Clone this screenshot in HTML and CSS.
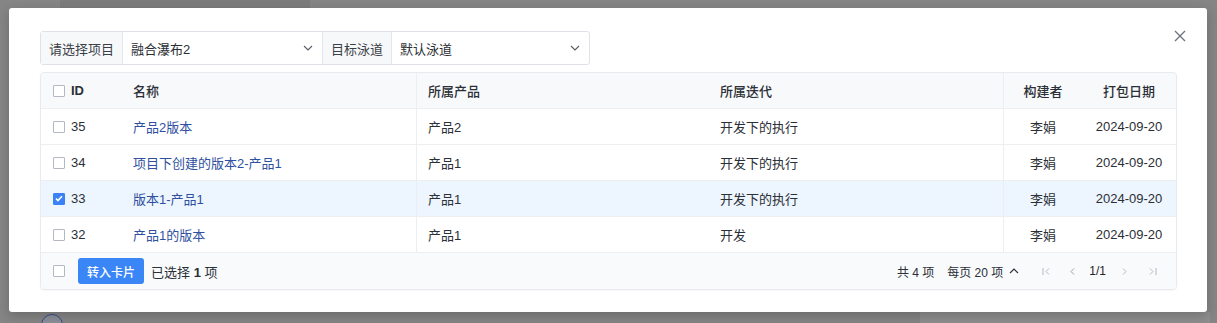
FILE: index.html
```html
<!DOCTYPE html>
<html lang="zh-CN">
  <head>
    <meta charset="UTF-8" />
    <title>转入卡片</title>
    <link rel="stylesheet" href="styles.css">
  </head>
  <body>
    <div class="backdrop">
      <div class="ghost ghost-a"></div>
      <div class="ghost ghost-b"></div>
      <div class="ghost-avatar"></div>
    </div>

    <div class="modal">
      <button class="close-btn" aria-label="关闭">
        <svg width="12" height="12" viewBox="0 0 12 12"><path d="M1 1L11 11M11 1L1 11" stroke="#6b7280" stroke-width="1.3" fill="none"/></svg>
      </button>

      <!-- 筛选条件 -->
      <div class="filter-bar">
        <span class="filter-label">请选择项目</span>
        <div class="filter-select select-project">
          <span>融合瀑布2</span>
          <svg class="chevron" width="10" height="6" viewBox="0 0 10 6"><path d="M1 1L5 5L9 1" stroke="#555b66" stroke-width="1.1" fill="none"/></svg>
        </div>
        <span class="filter-label">目标泳道</span>
        <div class="filter-select select-lane">
          <span>默认泳道</span>
          <svg class="chevron" width="10" height="6" viewBox="0 0 10 6"><path d="M1 1L5 5L9 1" stroke="#555b66" stroke-width="1.1" fill="none"/></svg>
        </div>
      </div>

      <!-- 版本列表 -->
      <div class="table">
        <div class="row head">
          <div class="cell col-id"><span class="checkbox"></span><b>ID</b></div>
          <div class="cell col-name">名称</div>
          <div class="cell col-product divider">所属产品</div>
          <div class="cell col-iter">所属迭代</div>
          <div class="cell col-owner divider">构建者</div>
          <div class="cell col-date">打包日期</div>
        </div>
        <div class="row">
          <div class="cell col-id"><span class="checkbox"></span>35</div>
          <div class="cell col-name"><a href="#">产品2版本</a></div>
          <div class="cell col-product divider">产品2</div>
          <div class="cell col-iter">开发下的执行</div>
          <div class="cell col-owner divider">李娟</div>
          <div class="cell col-date">2024-09-20</div>
        </div>
        <div class="row">
          <div class="cell col-id"><span class="checkbox"></span>34</div>
          <div class="cell col-name"><a href="#">项目下创建的版本2-产品1</a></div>
          <div class="cell col-product divider">产品1</div>
          <div class="cell col-iter">开发下的执行</div>
          <div class="cell col-owner divider">李娟</div>
          <div class="cell col-date">2024-09-20</div>
        </div>
        <div class="row selected">
          <div class="cell col-id"><span class="checkbox checked"><svg width="8" height="7" viewBox="0 0 8 7"><path d="M1 3.6L3 5.5L7 1.2" stroke="#fff" stroke-width="1.6" fill="none"/></svg></span>33</div>
          <div class="cell col-name"><a href="#">版本1-产品1</a></div>
          <div class="cell col-product divider">产品1</div>
          <div class="cell col-iter">开发下的执行</div>
          <div class="cell col-owner divider">李娟</div>
          <div class="cell col-date">2024-09-20</div>
        </div>
        <div class="row">
          <div class="cell col-id"><span class="checkbox"></span>32</div>
          <div class="cell col-name"><a href="#">产品1的版本</a></div>
          <div class="cell col-product divider">产品1</div>
          <div class="cell col-iter">开发</div>
          <div class="cell col-owner divider">李娟</div>
          <div class="cell col-date">2024-09-20</div>
        </div>

        <div class="table-footer">
          <div class="footer-left">
            <span class="checkbox"></span>
            <button class="primary-button">转入卡片</button>
            <span>已选择 <b>1</b> 项</span>
          </div>
          <div class="pager">
            <span>共 4 项</span>
            <span class="page-size">每页 20 项
              <svg width="10" height="6" viewBox="0 0 10 6"><path d="M1 5L5 1L9 5" stroke="#2b2f36" stroke-width="1.1" fill="none"/></svg>
            </span>
            <span class="pager-nav">
              <svg class="nav-first" width="9" height="9" viewBox="0 0 9 9"><path d="M1 1V8M7 1.5L4 4.5L7 7.5" stroke="#b5b9c1" stroke-width="1" fill="none"/></svg>
              <svg class="nav-prev" width="9" height="9" viewBox="0 0 9 9"><path d="M6 1.5L3 4.5L6 7.5" stroke="#9aa0a9" stroke-width="1" fill="none"/></svg>
              <span class="page-num">1/1</span>
              <svg class="nav-next" width="9" height="9" viewBox="0 0 9 9"><path d="M3 1.5L6 4.5L3 7.5" stroke="#b5b9c1" stroke-width="1" fill="none"/></svg>
              <svg class="nav-last" width="9" height="9" viewBox="0 0 9 9"><path d="M2 1.5L5 4.5L2 7.5M8 1V8" stroke="#b5b9c1" stroke-width="1" fill="none"/></svg>
            </span>
          </div>
        </div>
      </div>
    </div>
  </body>
</html>
```

FILE: styles.css
```css
body {
  font-family: "Liberation Sans", "Noto Sans CJK SC", Arial, sans-serif;
  font-size: 13px;
  color: #2b2f36;
  margin: 0;
  padding: 8px 10px 0 9px;
  height: 323px;
  box-sizing: border-box;
  overflow: hidden;
  background-color: #858585;
}

.backdrop {
  position: absolute;
  left: 0;
  top: 0;
  width: 1217px;
  height: 323px;
  overflow: hidden;
}

.ghost {
  position: absolute;
  background-color: #7b7b7b;
}

.ghost-a {
  left: 60px;
  top: 0;
  width: 250px;
  height: 8px;
}

.ghost-b {
  left: 920px;
  top: 312px;
  width: 290px;
  height: 11px;
  background-color: #8e8e8e;
}

.ghost-avatar {
  position: absolute;
  left: 41px;
  top: 314px;
  width: 20px;
  height: 20px;
  border: 1px solid #3a4f8a;
  border-radius: 50%;
  background-color: #8b8f98;
}

.modal {
  position: relative;
  width: 1198px;
  height: 304px;
  box-sizing: border-box;
  padding: 23px 30px 0 31px;
  background-color: #fff;
  border-radius: 3px;
  box-shadow: 0 4px 12px rgba(0, 0, 0, 0.2);
}

.close-btn {
  position: absolute;
  top: 22px;
  right: 21px;
  padding: 0;
  border: none;
  background: none;
  cursor: pointer;
  line-height: 0;
}

.filter-bar {
  display: flex;
  width: 550px;
  height: 34px;
  border: 1px solid #dfe2e8;
  border-radius: 3px;
  box-sizing: border-box;
}

.filter-label {
  display: flex;
  align-items: center;
  padding: 0 8px;
  background-color: #f7f8fa;
  color: #3b3f47;
  border-right: 1px solid #e3e6eb;
}

.filter-label + .filter-select {
  border-right: 1px solid #e3e6eb;
}

.filter-select {
  display: flex;
  align-items: center;
  justify-content: space-between;
  padding: 0 9px 0 8px;
  box-sizing: border-box;
}

.filter-select:last-child {
  border-right: none;
}

.select-project {
  width: 200px;
}

.select-lane {
  flex: 1;
}

.table {
  margin-top: 7px;
  width: 1137px;
  border: 1px solid #e8eaee;
  border-radius: 4px;
  box-sizing: border-box;
  box-shadow: 0 1px 2px rgba(0, 0, 0, 0.04);
}

.row {
  display: flex;
  height: 36px;
  border-bottom: 1px solid #eceef2;
  box-sizing: border-box;
}

.row.head {
  background-color: #f8f9fb;
  border-radius: 4px 4px 0 0;
}

.row.head .cell {
  font-weight: 500;
  color: #2b2f36;
}

.row.selected {
  background-color: #edf5fe;
}

.cell {
  display: flex;
  align-items: center;
  padding: 0 11px;
  box-sizing: border-box;
  white-space: nowrap;
}

.divider {
  border-left: 1px solid #eceef2;
}

.col-id {
  width: 81px;
  padding-left: 12px;
  gap: 6px;
}

.col-name {
  width: 294px;
}

.col-product {
  width: 293px;
}

.col-iter {
  width: 294px;
}

.col-owner {
  width: 79px;
  justify-content: center;
}

.col-date {
  flex: 1;
  justify-content: center;
}

.col-name a {
  color: #2f4fa0;
  text-decoration: none;
}

.checkbox {
  display: inline-flex;
  align-items: center;
  justify-content: center;
  width: 12px;
  height: 12px;
  border: 1px solid #b3b8c2;
  border-radius: 1px;
  box-sizing: border-box;
  background-color: #fff;
}

.checkbox.checked {
  border-color: #3b82f6;
  background-color: #3b82f6;
}

.table-footer {
  display: flex;
  align-items: center;
  justify-content: space-between;
  height: 36px;
  padding: 0 19px 0 12px;
  background-color: #f9fafc;
  border-radius: 0 0 4px 4px;
}

.footer-left {
  display: flex;
  align-items: center;
}

.footer-left .checkbox {
  margin-right: 13px;
}

.primary-button {
  height: 26px;
  padding: 0 9px;
  margin-right: 7px;
  border: none;
  border-radius: 3px;
  background-color: #3a86f7;
  color: #fff;
  font-family: inherit;
  font-size: 12px;
  font-weight: 500;
  cursor: pointer;
}

.pager {
  display: flex;
  align-items: center;
  gap: 13px;
  font-size: 12px;
}

.page-size {
  display: flex;
  align-items: center;
  gap: 6px;
}

.pager-nav {
  display: flex;
  align-items: center;
  margin-left: 10px;
}

.nav-prev {
  margin-left: 17px;
}

.page-num {
  font-size: 12px;
  color: #1f2329;
  margin-left: 12px;
}

.nav-next {
  margin-left: 14px;
}

.nav-last {
  margin-left: 19px;
}
```
